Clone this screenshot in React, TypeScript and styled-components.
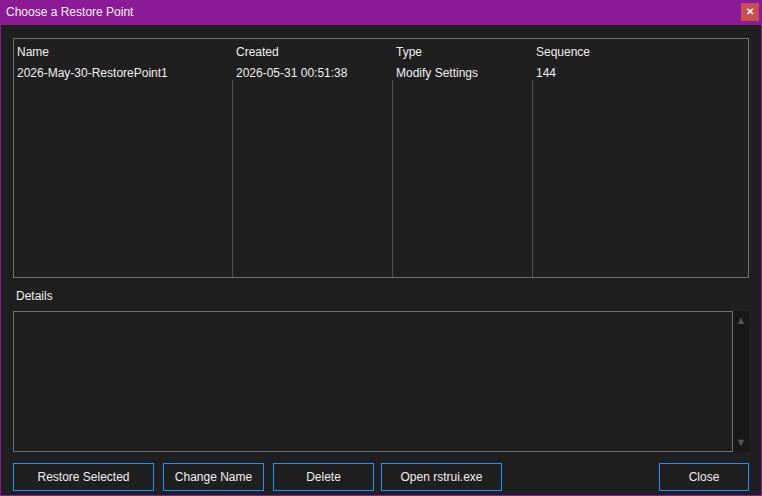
import React from "react";
import styled, { createGlobalStyle } from "styled-components";

const Global = createGlobalStyle`
  html, body { margin: 0; background: #1f1f1f; }
  body { font-family: "Liberation Sans", Arial, sans-serif; font-size: 12px; color: #f0f0f0; }
`;

const Win = styled.div`
  width: 762px;
  height: 496px;
  box-sizing: border-box;
  border: 1px solid #8a1a96;
  border-top: none;
  background: #1f1f1f;
  display: flex;
  flex-direction: column;
`;

const TitleBar = styled.div`
  height: 25px;
  flex-shrink: 0;
  margin: 0 -1px;
  background: #8a1a96;
  display: flex;
  align-items: center;
  justify-content: space-between;
  padding: 0 3px 2px 6px;
  box-sizing: border-box;
  font-size: 12px;
  color: #f4f4f4;
`;

const CloseX = styled.div`
  width: 18px;
  height: 18px;
  background: #c85050;
  color: #fff;
  font-size: 10px;
  font-weight: bold;
  display: flex;
  align-items: center;
  justify-content: center;
`;

const Body = styled.div`
  flex: 1;
  display: flex;
  flex-direction: column;
  padding: 13px 12px 6px 12px;
`;

const List = styled.div`
  height: 240px;
  flex-shrink: 0;
  box-sizing: border-box;
  border: 1px solid #6f6f6f;
  display: grid;
  grid-template-columns: 219px 160px 140px 1fr;
`;

const Col = styled.div<{ $sep?: boolean }>`
  display: flex;
  flex-direction: column;
  position: relative;
  padding: 6px 0 0 3px;
  &::after {
    content: "";
    display: ${(p) => (p.$sep ? "block" : "none")};
    position: absolute;
    right: 0;
    top: 41px;
    bottom: 0;
    width: 1px;
    background: #505050;
  }
`;

const Cell = styled.div`
  height: 21px;
  line-height: 14px;
  white-space: nowrap;
`;

const Label = styled.div`
  margin: 11px 0 8px 3px;
  line-height: 14px;
`;

const DetailsRow = styled.div`
  height: 141px;
  flex-shrink: 0;
  display: flex;
`;

const TextArea = styled.div`
  flex: 1;
  border: 1px solid #6f6f6f;
  background: #1f1f1f;
`;

const Scroll = styled.div`
  width: 16px;
  background: #181818;
  display: flex;
  flex-direction: column;
  justify-content: space-between;
  align-items: center;
  padding: 4px 0;
  color: #555;
  font-size: 11px;
  line-height: 11px;
`;

const Buttons = styled.div`
  margin-top: 11px;
  display: flex;
  gap: 9px;
`;

const Btn = styled.button<{ $w: number; $push?: boolean; $tight?: boolean }>`
  width: ${(p) => p.$w}px;
  height: 28px;
  background: #1f1f1f;
  border: 1px solid #1e90ff;
  color: #f0f0f0;
  font-family: "Liberation Sans", Arial, sans-serif;
  font-size: 12px;
  padding: 0;
  margin-left: ${(p) => (p.$push ? "auto" : p.$tight ? "-2px" : "0")};
`;

const cols = [
  ["Name", "2026-May-30-RestorePoint1"],
  ["Created", "2026-05-31 00:51:38"],
  ["Type", "Modify Settings"],
  ["Sequence", "144"],
];

export default function App() {
  return (
    <>
      <Global />
      <Win>
        <TitleBar>
          <span>Choose a Restore Point</span>
          <CloseX>✕</CloseX>
        </TitleBar>
        <Body>
          <List>
            {cols.map((c, i) => (
              <Col key={c[0]} $sep={i < 3}>
                <Cell>{c[0]}</Cell>
                <Cell>{c[1]}</Cell>
              </Col>
            ))}
          </List>
          <Label>Details</Label>
          <DetailsRow>
            <TextArea />
            <Scroll>
              <span>▲</span>
              <span>▼</span>
            </Scroll>
          </DetailsRow>
          <Buttons>
            <Btn $w={141}>Restore Selected</Btn>
            <Btn $w={101}>Change Name</Btn>
            <Btn $w={101}>Delete</Btn>
            <Btn $w={121} $tight>Open rstrui.exe</Btn>
            <Btn $w={90} $push>Close</Btn>
          </Buttons>
        </Body>
      </Win>
    </>
  );
}
